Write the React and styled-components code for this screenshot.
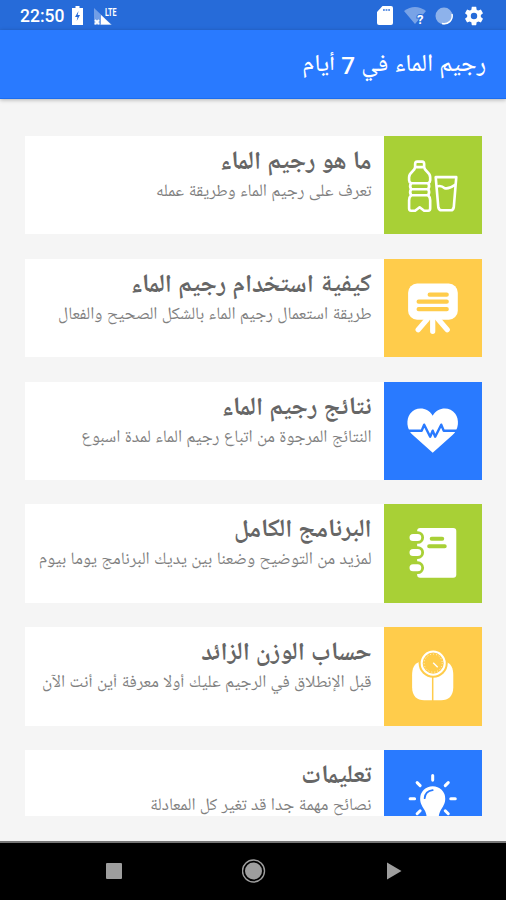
import styled, { createGlobalStyle } from "styled-components";

const GlobalStyle = createGlobalStyle`
  * {
    box-sizing: border-box;
  }

  body {
    margin: 0;
    background: #f5f5f5;
    font-family: Roboto, "Noto Naskh Arabic UI", "Noto Sans Arabic", "DejaVu Sans", sans-serif;
  }
`;

const Screen = styled.div`
  display: flex;
  flex-direction: column;
  width: 506px;
  height: 900px;
  overflow: hidden;
  background: #f5f5f5;
`;

const StatusBar = styled.div`
  display: flex;
  flex: none;
  justify-content: space-between;
  height: 30px;
  padding: 1px 21px 0 20px;
  background: #266bd9;
  color: #fff;
`;

const StatusGroup = styled.div`
  display: flex;
  align-items: center;
`;

const Clock = styled.span`
  width: 52px;
  font-size: 17.5px;
  line-height: 32px;
  font-weight: 500;
  white-space: nowrap;
`;

const StatusIcon = styled.svg`
  display: block;
  flex: none;
  margin-left: ${(props) => props.$gap || 0}px;
  overflow: visible;
`;

const AppBar = styled.header`
  position: relative;
  display: flex;
  flex: none;
  align-items: center;
  height: 69px;
  padding: 4px 20px 0 0;
  background: #297aff;
  border-bottom: 1px solid #1b6df0;
  box-shadow: 0 1px 4px rgba(0, 0, 0, 0.28);
  color: #fff;
`;

const Heading = styled.h1`
  margin: 0;
  font-size: 24.4px;
  line-height: 32px;
  font-weight: 500;
  white-space: nowrap;
`;

const List = styled.main`
  display: flex;
  flex: none;
  flex-direction: column;
  gap: 24.4px;
  height: 680px;
  margin: 37px 24px 25px 25px;
  overflow: hidden;
`;

const Card = styled.article`
  display: flex;
  flex: none;
  height: 98.4px;
  background: #fff;
`;

const Tile = styled.div`
  flex: none;
  width: 98.4px;
  height: 98.4px;
  background: ${(props) => props.$color};

  svg {
    display: block;
    width: 98.4px;
    height: 98.4px;
  }
`;

const Copy = styled.div`
  flex: 1;
  min-width: 0;
  padding: 12px 12px 0 0;
`;

const Title = styled.h2`
  margin: 0;
  font-size: 24.85px;
  line-height: 32px;
  font-weight: bold;
  color: #666;
  white-space: nowrap;
`;

const Subtitle = styled.p`
  margin: -1px 0 0;
  font-size: 17.35px;
  line-height: 26px;
  color: #808080;
  white-space: nowrap;
`;

const NavBar = styled.nav`
  display: flex;
  flex: none;
  align-items: center;
  justify-content: space-between;
  height: 59px;
  padding: 0 102px 2px 103px;
  background: #000;
  border-top: 2px solid #777;
`;

const GREEN = "#a8d036";
const YELLOW = "#ffcc4b";
const BLUE = "#297aff";

// Tile drawings share a 98 unit canvas
function BottleIcon() {
  return (
    <svg viewBox="0 0 98 98" fill="none" stroke="#fff" strokeWidth="2.6" strokeLinejoin="round" strokeLinecap="round">
      <path d="M31 31v-3q0-2.500 2-2.500h5q2 0 2 2.500v3zM31 31c0 4-6 5-6 10v3q0 2 2 3-2 3 0 6-2 3 0 6-2 2-2 5v8q0 2.500 2 2.500h4l4.500-3.500 4.500 3.500h4q2 0 2-2.500v-8q0-3-2-5 2-3 0-6 2-3 0-6 2-1 2-3v-3c0-5-6-6-6-10" />
      <path d="M27 47h17M27 53h17M27 59h17" />
      <path d="M51.500 41h20.500l-2.500 30q-.4 3-3 3h-9q-3 0-3.400-3zM52.500 50.500q4-2 8 1.500 4 1 9.500-3" />
    </svg>
  );
}

function BoardIcon() {
  return (
    <svg viewBox="0 0 98 98">
      <rect x="24" y="24.5" width="49.5" height="36" rx="9" fill="#fff" />
      <path d="M43 60l-9 10.500M48.500 60v12M54 60l9 10.500" stroke="#fff" strokeWidth="5.200" strokeLinecap="round" />
      <path d="M45.500 35.500h17M34.500 42.500h28M34.500 50h28" stroke={YELLOW} strokeWidth="4.200" strokeLinecap="round" />
    </svg>
  );
}

function HeartIcon() {
  return (
    <svg viewBox="0 0 98 98">
      <path d="M48.500 70.500L29 53C22 47 22 37 26 31.500c5.500-7.500 17.500-7 22.500 2 5-9 17-9.500 22.500-2 4 5.500 4 15.500-3 21.500z" fill="#fff" />
      <path d="M22 48.500h15.500l2.500-6 6 12 2.500-6 2.500 6 6-12 2.500 6h16" fill="none" stroke={BLUE} strokeWidth="2.400" strokeLinejoin="round" />
    </svg>
  );
}

function NotebookIcon() {
  return (
    <svg viewBox="0 0 98 98">
      <rect x="33" y="24" width="39" height="49.500" rx="3" fill="#fff" />
      <g fill="#fff" stroke={GREEN} strokeWidth="2.800">
        <rect x="24" y="28.500" width="14.500" height="9.800" rx="4.900" />
        <rect x="24" y="43.500" width="14.500" height="9.800" rx="4.900" />
        <rect x="24" y="58.500" width="14.500" height="9.800" rx="4.900" />
      </g>
      <path d="M47.500 34.500h10.500M45 42h15.500" stroke={GREEN} strokeWidth="4" strokeLinecap="round" />
    </svg>
  );
}

function ScaleIcon() {
  return (
    <svg viewBox="0 0 98 98">
      <path d="M36 34.500C30 36 28 41 28 48v12c0 9 5 13 12 13h17c7 0 12-4 12-13V48c0-7-2-12-8-13.500z" fill="#fff" />
      <path d="M48.500 48v27" stroke={YELLOW} strokeWidth="1.500" />
      <circle cx="49" cy="36" r="14.500" fill={YELLOW} />
      <circle cx="49" cy="36" r="11.500" fill="none" stroke="#fff" strokeWidth="2" />
      <circle cx="49" cy="36" r="9" fill="none" stroke="#fff" strokeWidth=".7" strokeDasharray="1 2" />
      <path d="M49 35.500l4.500 4.500" stroke="#fff" strokeWidth="1.400" />
    </svg>
  );
}

function BulbIcon() {
  return (
    <svg viewBox="0 0 98 98">
      <path d="M42.500 68c0-3-.5-5-2-8-2-3.500-4.500-6.500-4.500-11.500a12.500 12.500 0 0 1 25 0c0 5-2.500 8-4.500 11.500-1.500 3-2 5-2 8z" fill="#fff" />
      <path d="M40.500 48q.5-7 8-8" fill="none" stroke={BLUE} strokeWidth="1.800" strokeLinecap="round" />
      <path d="M48.500 25.500v4.500M33 32.500l3 3M64 32.500l-3 3M26 48.500h4.500M66.500 48.500h4.500M36 60.500l-3 3M61 60.500l3 3" stroke="#fff" strokeWidth="3" strokeLinecap="round" />
    </svg>
  );
}

const items = [
  { title: "ما هو رجيم الماء", text: "تعرف على رجيم الماء وطريقة عمله", color: GREEN, Icon: BottleIcon },
  { title: "كيفية استخدام رجيم الماء", text: "طريقة استعمال رجيم الماء بالشكل الصحيح والفعال", color: YELLOW, Icon: BoardIcon },
  { title: "نتائج رجيم الماء", text: "النتائج المرجوة من اتباع رجيم الماء لمدة اسبوع", color: BLUE, Icon: HeartIcon },
  { title: "البرنامج الكامل", text: "لمزيد من التوضيح وضعنا بين يديك البرنامج يوما بيوم", color: GREEN, Icon: NotebookIcon },
  { title: "حساب الوزن الزائد", text: "قبل الإنطلاق في الرجيم عليك أولا معرفة أين أنت الآن", color: YELLOW, Icon: ScaleIcon },
  { title: "تعليمات", text: "نصائح مهمة جدا قد تغير كل المعادلة", color: BLUE, Icon: BulbIcon },
];

export default function App() {
  return (
    <>
      <GlobalStyle />
      <Screen dir="rtl">
        <StatusBar dir="ltr">
          <StatusGroup>
            <Clock>22:50</Clock>
            <StatusIcon width="11" height="19" viewBox="0 0 11 19">
              <path d="M3.500 0h4v2H11v17H0V2h3.500z" fill="#fff" />
              <path d="M6.500 5L3 11h2.500l-.8 4L8 9H5.700z" fill="#266bd9" />
            </StatusIcon>
            <StatusIcon $gap={10} width="24" height="20" viewBox="0 0 24 20">
              <path d="M1 2l18 17H1z" fill="#fff" opacity=".35" />
              <path d="M8 9l10 9.500H8z" fill="#fff" />
              <path d="M2 14l4 4M6 14l-4 4" stroke="#fff" strokeWidth="1.800" />
              <text x="12" y="9.500" fill="#fff" fontSize="10.500" fontWeight="bold" textLength="11.500" lengthAdjust="spacingAndGlyphs">LTE</text>
            </StatusIcon>
          </StatusGroup>
          <StatusGroup>
            <StatusIcon width="16" height="19" viewBox="0 0 16 19">
              <path d="M5.500 0H14q2 0 2 2v15q0 2-2 2H2q-2 0-2-2V6z" fill="#fff" />
              <path d="M6 4h7" stroke="#266bd9" strokeWidth="2" strokeDasharray="1.800 .8" opacity=".7" />
            </StatusIcon>
            <StatusIcon $gap={11} width="22" height="18" viewBox="0 0 22 18">
              <path d="M0 4Q11-4 22 4L11 17z" fill="#fff" opacity=".38" />
              <text x="13" y="16.500" fill="#fff" stroke="#266bd9" strokeWidth="2" paintOrder="stroke" fontSize="13" fontWeight="bold">?</text>
            </StatusIcon>
            <StatusIcon $gap={9} width="18" height="18" viewBox="0 0 18 18">
              <circle cx="9" cy="9" r="8.500" fill="#fff" opacity=".48" />
              <path d="M17 7A8 8 0 0 1 7 16.500" fill="none" stroke="#fff" strokeWidth="1.500" />
            </StatusIcon>
            <StatusIcon $gap={10} width="22" height="22" viewBox="0 0 24 24">
              <path fill="#fff" d="M19.430 12.980c.04-.32.070-.64.070-.98s-.03-.66-.07-.98l2.110-1.650c.19-.15.240-.42.120-.64l-2-3.460c-.12-.22-.39-.3-.61-.22l-2.490 1c-.52-.4-1.080-.73-1.690-.98l-.38-2.650C14.460 2.180 14.250 2 14 2h-4c-.25 0-.46.180-.49.420l-.38 2.650c-.61.25-1.170.59-1.690.98l-2.490-1c-.23-.09-.49 0-.61.220l-2 3.460c-.13.220-.07.490.12.640l2.110 1.650c-.04.320-.07.650-.07.980s.03.660.07.980l-2.110 1.650c-.19.150-.24.420-.12.640l2 3.460c.12.220.39.300.61.220l2.490-1c.52.400 1.080.730 1.690.980l.38 2.650c.03.240.24.420.49.420h4c.25 0 .46-.18.490-.42l.38-2.650c.61-.25 1.170-.59 1.690-.98l2.490 1c.23.090.49 0 .61-.22l2-3.460c.12-.22.070-.49-.12-.64zM12 15.500A3.500 3.500 0 1 1 12 8.500a3.500 3.500 0 0 1 0 7z" />
            </StatusIcon>
          </StatusGroup>
        </StatusBar>
        <AppBar>
          <Heading>رجيم الماء في 7 أيام</Heading>
        </AppBar>
        <List>
          {items.map(({ title, text, color, Icon }) => (
            <Card key={title}>
              <Tile $color={color}>
                <Icon />
              </Tile>
              <Copy>
                <Title>{title}</Title>
                <Subtitle>{text}</Subtitle>
              </Copy>
            </Card>
          ))}
        </List>
        <NavBar dir="ltr">
          <svg width="22" height="22" viewBox="0 0 22 22">
            <rect x="3" y="3" width="16" height="16" rx="1" fill="#9e9e9e" />
          </svg>
          <svg width="24" height="24" viewBox="0 0 24 24">
            <circle cx="11.500" cy="12" r="11" fill="none" stroke="#9e9e9e" strokeWidth="1.400" />
            <circle cx="11.500" cy="12" r="8.500" fill="#9e9e9e" />
          </svg>
          <svg width="22" height="22" viewBox="0 0 22 22">
            <path d="M5 2.500L19.500 11 5 19.500z" fill="#9e9e9e" />
          </svg>
        </NavBar>
      </Screen>
    </>
  );
}
